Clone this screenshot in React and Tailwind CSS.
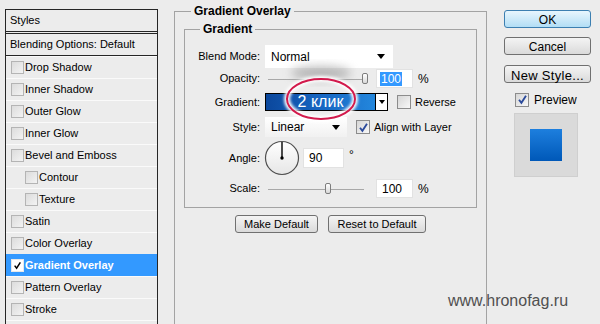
import React from 'react';

const effects = [
  { label: 'Drop Shadow' },
  { label: 'Inner Shadow' },
  { label: 'Outer Glow' },
  { label: 'Inner Glow' },
  { label: 'Bevel and Emboss' },
  { label: 'Contour', sub: true },
  { label: 'Texture', sub: true },
  { label: 'Satin' },
  { label: 'Color Overlay' },
  { label: 'Gradient Overlay', active: true },
  { label: 'Pattern Overlay' },
  { label: 'Stroke' },
  { label: '', blank: true },
];

function Tick({ className }) {
  return (
    <svg viewBox="0 0 12 12" className={className}>
      <path d="M2.2 6.2 L4.8 9.6 L9.8 1.8" fill="none" stroke="currentColor" strokeWidth="2" />
    </svg>
  );
}

function Arrow() {
  return (
    <svg viewBox="0 0 8 5" className="w-[8px] h-[5px]">
      <path d="M0 0 H8 L4 5 Z" fill="#000" />
    </svg>
  );
}

function CheckBox({ checked }) {
  return (
    <span className="w-[14px] h-[14px] shrink-0 border border-[#8c8c8c] bg-gradient-to-br from-[#d6d6d6] to-[#f8f8f8] flex items-center justify-center text-[#2b4a9b]">
      {checked && <Tick className="w-[11px] h-[11px]" />}
    </span>
  );
}

function StylesList() {
  return (
    <div className="ml-[5px] mt-[9px] w-[153px] h-[330px] shrink-0 border border-[#262626]">
      <div className="h-[24px] pl-[4px] flex items-center border-b-[3px] border-double border-b-[#262626]">Styles</div>
      <div className="h-[22px] pl-[4px] flex items-center border-b border-b-[#262626]">Blending Options: Default</div>
      {effects.map((e, i) => (
        <div
          key={i}
          className={`h-[22px] border-t flex items-center ${e.active ? 'bg-[#3399ff] border-t-[#3399ff] text-white font-bold' : 'border-t-[#fafafa]'} ${e.sub ? 'pl-[19px]' : 'pl-[5px]'}`}
        >
          {!e.blank && (
            <span className={`w-[13px] h-[13px] shrink-0 border flex items-center justify-center ${e.active ? 'border-[#e8e8e8] bg-white text-black' : 'border-[#b4b4b4] bg-gradient-to-br from-[#dcdcdc] to-[#f3f3f3]'}`}>
              {e.active && <Tick className="w-[9px] h-[9px]" />}
            </span>
          )}
          <span className="ml-[1px]">{e.label}</span>
        </div>
      ))}
    </div>
  );
}

function Slider({ thumb }) {
  return (
    <div className="relative w-[105px] h-full">
      <div className="absolute left-[3px] right-[6px] top-1/2 h-px bg-[#a8a8a8]" />
      <div className={`absolute ${thumb} top-[4px] w-[6px] h-[11px] rounded-[2px] border border-[#7d7d7d] bg-gradient-to-b from-white to-[#d9d9d9]`} />
    </div>
  );
}

function Label({ children }) {
  return <div className="w-[75px] shrink-0 text-right">{children}</div>;
}

function OverlayPanel() {
  return (
    <div className="ml-[16px] mt-[11px] w-[313px] h-[330px] shrink-0 border border-[#a3a3a3]">
      <div className="-mt-[8px] ml-[16px] px-[3px] w-fit bg-[#ececec] text-[12px] leading-[14px] font-bold">Gradient Overlay</div>

      <div className="mt-[11px] mx-[9px] border border-[#a3a3a3] pb-[9px]">
        <div className="-mt-[8px] ml-[15px] px-[3px] w-fit bg-[#ececec] text-[12px] leading-[14px] font-bold">Gradient</div>

        <div className="mt-[9px] h-[23px] flex items-center">
          <Label>Blend Mode:</Label>
          <div className="ml-[5px] w-[128px] h-full bg-white flex items-center justify-between pl-[6px] pr-[8px] text-[12px]">
            <span>Normal</span>
            <Arrow />
          </div>
        </div>

        <div className="mt-[1px] h-[19px] flex items-center">
          <Label>Opacity:</Label>
          <div className="ml-[5px] h-full">
            <Slider thumb="left-[97px]" />
          </div>
          <div className="ml-[6px] w-[37px] h-full bg-white border border-[#e2e2e2] flex items-center pl-[3px]">
            <span className="bg-[#3399ff] text-white text-[12px] leading-[14px] px-px">100</span>
          </div>
          <span className="ml-[5px] text-[12px]">%</span>
        </div>

        <div className="mt-[5px] h-[18px] flex items-center">
          <Label>Gradient:</Label>
          <div className="ml-[5px] w-[123px] h-full border border-black flex">
            <div className="flex-1 bg-gradient-to-r from-[#0b479c] via-[#1766c2] to-[#2387dd] flex items-center justify-center text-white text-[16px] leading-[16px]">2 клик</div>
            <div className="w-[12px] bg-white border-l border-l-black flex items-center justify-center">
              <svg viewBox="0 0 6 4" className="w-[6px] h-[4px]"><path d="M0 0 H6 L3 4 Z" fill="#000" /></svg>
            </div>
          </div>
          <div className="ml-[9px]"><CheckBox /></div>
          <span className="ml-[4px]">Reverse</span>
        </div>

        <div className="mt-[6px] h-[20px] flex items-center">
          <Label>Style:</Label>
          <div className="ml-[5px] w-[82px] h-full bg-gradient-to-b from-white to-[#f1f1f1] flex items-center justify-between pl-[6px] pr-[7px] text-[12px]">
            <span>Linear</span>
            <Arrow />
          </div>
          <div className="ml-[9px]"><CheckBox checked /></div>
          <span className="ml-[4px]">Align with Layer</span>
        </div>

        <div className="mt-[3px] h-[34px] flex items-start">
          <Label><div className="mt-[10px]">Angle:</div></Label>
          <svg viewBox="0 0 36 36" className="ml-[4px] w-[36px] h-[36px]">
            <defs>
              <linearGradient id="dial" x1="0" y1="0" x2="0" y2="1">
                <stop offset="0" stopColor="#ffffff" />
                <stop offset="1" stopColor="#e6e6e6" />
              </linearGradient>
            </defs>
            <circle cx="18" cy="18" r="16.5" fill="url(#dial)" stroke="#4f4f4f" strokeWidth="1.2" />
            <line x1="18" y1="2" x2="18" y2="18" stroke="#000" strokeWidth="1.4" />
            <circle cx="18" cy="18" r="1.7" fill="#000" />
          </svg>
          <div className="ml-[3px] mt-[8px] w-[41px] h-[20px] bg-white border border-[#e2e2e2] flex items-center pl-[5px] text-[12px]">90</div>
          <span className="ml-[5px] mt-[6px] text-[12px]">°</span>
        </div>

        <div className="mt-[5px] h-[19px] flex items-center">
          <Label>Scale:</Label>
          <div className="ml-[5px] h-full">
            <Slider thumb="left-[60px]" />
          </div>
          <div className="ml-[6px] w-[37px] h-full bg-white border border-[#e2e2e2] flex items-center pl-[5px] text-[12px]">100</div>
          <span className="ml-[5px] text-[12px]">%</span>
        </div>
      </div>

      <div className="mt-[7px] flex justify-center gap-[10px]">
        <button className="w-[83px] h-[18px] rounded-[3px] border border-[#707070] bg-gradient-to-b from-[#f4f4f4] to-[#dadada] text-[11px]">Make Default</button>
        <button className="w-[98px] h-[18px] rounded-[3px] border border-[#707070] bg-gradient-to-b from-[#f4f4f4] to-[#dadada] text-[11px]">Reset to Default</button>
      </div>
    </div>
  );
}

function SideButtons() {
  return (
    <div className="ml-[17px] w-[87px] shrink-0 flex flex-col text-[12px]">
      <button className="mt-[10px] h-[18px] rounded-[3px] border border-[#3c7fb1] bg-gradient-to-b from-[#e8f6fd] to-[#b2def5]">OK</button>
      <button className="mt-[9px] h-[18px] rounded-[3px] border border-[#707070] bg-gradient-to-b from-[#f4f4f4] to-[#dadada]">Cancel</button>
      <button className="mt-[10px] h-[18px] rounded-[3px] border border-[#707070] bg-gradient-to-b from-[#f4f4f4] to-[#dadada] text-[13px] tracking-[0.3px]">New Style...</button>
      <div className="mt-[9px] ml-[11px] h-[15px] flex items-center">
        <CheckBox checked />
        <span className="ml-[5px] text-[12px]">Preview</span>
      </div>
      <div className="mt-[6px] ml-[10px] w-[64px] h-[64px] bg-[#dadada] border border-[#cfcfcf] flex items-center justify-center">
        <div className="w-[32px] h-[32px] bg-gradient-to-b from-[#1d7fde] to-[#0058b8]" />
      </div>
    </div>
  );
}

export default function App() {
  return (
    <div className="relative w-[600px] h-[324px] overflow-hidden bg-[#ececec] text-black text-[11px] font-['Liberation_Sans',Arial,sans-serif] flex items-start">
      <StylesList />
      <OverlayPanel />
      <SideButtons />

      <svg viewBox="0 0 110 80" className="absolute left-[270px] top-[55px] w-[110px] h-[80px] pointer-events-none">
        <defs>
          <filter id="soft" x="-50%" y="-50%" width="200%" height="200%">
            <feGaussianBlur stdDeviation="5" />
          </filter>
          <filter id="halo" x="-30%" y="-30%" width="160%" height="160%">
            <feGaussianBlur stdDeviation="1.8" />
          </filter>
        </defs>
        <ellipse cx="51" cy="18" rx="30" ry="7" fill="#8a8a8a" opacity="0.55" filter="url(#soft)" />
        <ellipse cx="51" cy="44" rx="34" ry="20" fill="none" stroke="#ffffff" strokeWidth="6" filter="url(#halo)" />
        <ellipse cx="51" cy="44" rx="34" ry="20" fill="none" stroke="#d21a4c" strokeWidth="2" />
      </svg>

      <div className="absolute left-[448px] top-[291px] text-[16px] leading-[20px] text-[#505050]">www.hronofag.ru</div>
    </div>
  );
}
